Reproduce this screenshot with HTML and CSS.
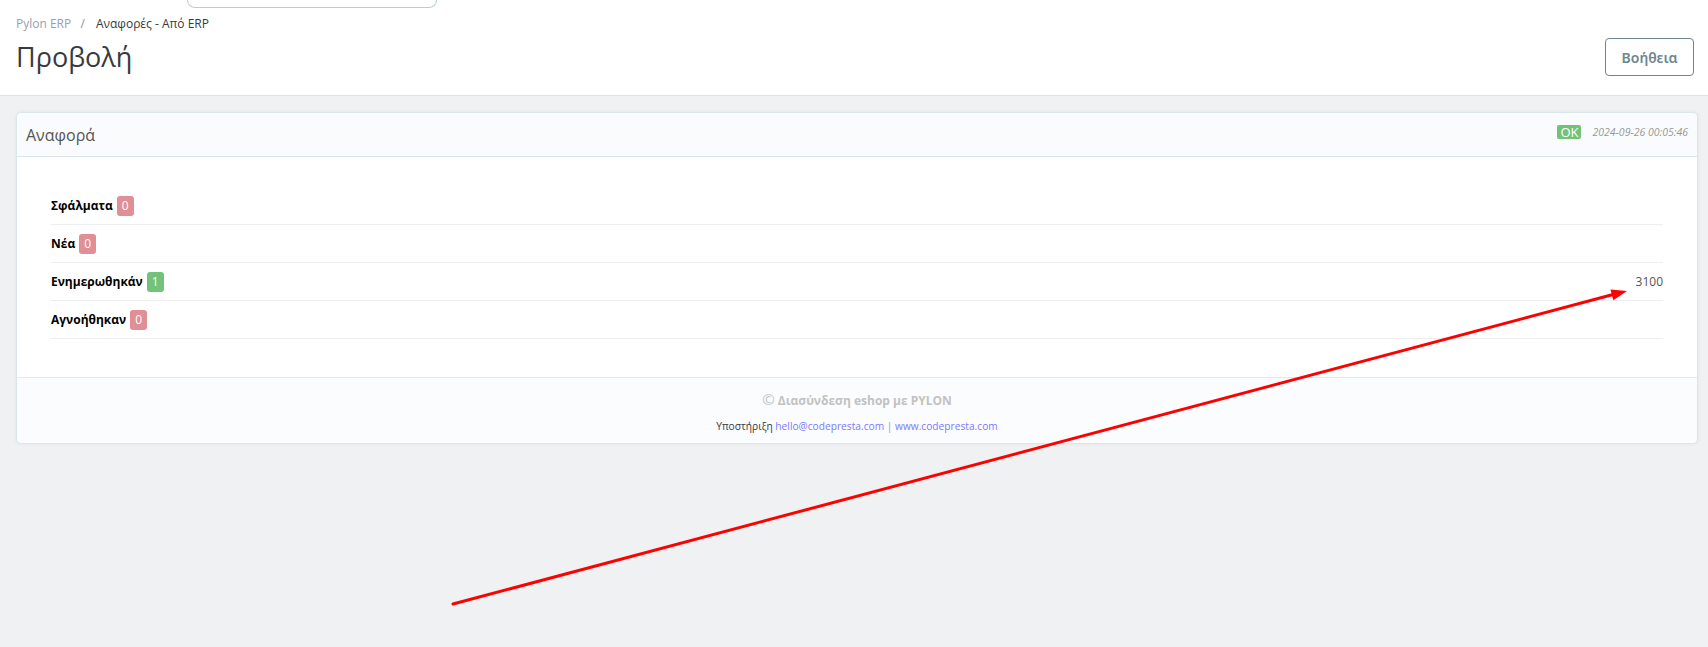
FILE: index.html
```html
<!DOCTYPE html>
<html>
<head>
    <title>Pylon ERP - Αναφορές</title>
    <link rel="stylesheet" href="styles.css">
</head>
<body>
    <div class="page-head">
        <div class="searchbox"></div>
        <div class="breadcrumb">
            <span class="crumb">Pylon ERP</span>
            <span class="sep">/</span>
            <span class="crumb-active">Αναφορές - Από ERP</span>
        </div>
        <div class="title-row">
            <h1>Προβολή</h1>
            <button class="btn-help">Βοήθεια</button>
        </div>
    </div>

    <div class="content">
        <div class="panel">
            <div class="panel-heading">
                <span class="panel-title">Αναφορά</span>
                <span class="panel-meta">
                    <span class="label-ok">OK</span>
                    <span class="date">2024-09-26 00:05:46</span>
                </span>
            </div>
            <div class="panel-body">
                <div class="row">
                    <span class="row-label">Σφάλματα <span class="badge badge-red">0</span></span>
                </div>
                <div class="row">
                    <span class="row-label">Νέα <span class="badge badge-red">0</span></span>
                </div>
                <div class="row">
                    <span class="row-label">Ενημερωθηκάν <span class="badge badge-green">1</span></span>
                    <span class="row-value">3100</span>
                </div>
                <div class="row">
                    <span class="row-label">Αγνοήθηκαν <span class="badge badge-red">0</span></span>
                </div>
            </div>
            <div class="panel-footer">
                <div class="copy"><span class="copy-mark">©</span> Διασύνδεση eshop με PYLON</div>
                <div class="support">
                    Υποστήριξη <a href="#">hello@codepresta.com</a> <span class="pipe">|</span> <a href="#">www.codepresta.com</a>
                </div>
            </div>
        </div>
    </div>

    <!-- annotation arrow drawn over the screenshot -->
    <svg class="annotation" width="1708" height="647" viewBox="0 0 1708 647">
        <line x1="453" y1="604" x2="1613" y2="294.5" stroke="#ff0000" stroke-width="3" stroke-linecap="round"/>
        <polygon points="1627,291 1613.3,300.2 1610.5,289.6" fill="#ff0000"/>
    </svg>
</body>
</html>
```

FILE: styles.css
```css
body {
    margin: 0;
    font-family: 'Open Sans', 'Noto Sans', sans-serif;
    background: #eff1f2;
    color: #363a41;
    position: relative;
    min-height: 647px;
}
.page-head {
    background: #fff;
    border-bottom: 1px solid #dde2e5;
    padding: 0 14px 19px 16px;
}
.searchbox {
    width: 248px;
    height: 7px;
    margin-left: 171px;
    border: 1px solid #bbcdd2;
    border-top: 0;
    border-radius: 0 0 16px 16px;
}
.breadcrumb {
    margin-top: 8px;
    font-size: 12px;
    line-height: 16px;
}
.crumb {
    color: #9aa0a6;
}
.sep {
    color: #8a9096;
    margin: 0 8px 0 6px;
}
.crumb-active {
    color: #363a41;
}
.title-row {
    display: flex;
    justify-content: space-between;
    align-items: center;
    margin-top: 6px;
}
h1 {
    margin: 0;
    font-size: 27px;
    font-weight: 400;
    line-height: 38px;
    color: #363a41;
}
.btn-help {
    width: 89px;
    height: 38px;
    background: #fff;
    border: 1px solid #6c868e;
    border-radius: 4px;
    color: #6c868e;
    font-family: 'Noto Sans', 'Open Sans', sans-serif;
    font-size: 14px;
    font-weight: 600;
    cursor: pointer;
}
.content {
    padding: 16px 10px 0 16px;
}
.panel {
    background: #fff;
    border: 1px solid #dbe6e9;
    border-radius: 5px;
    box-shadow: 0 0 4px rgba(0, 0, 0, 0.06);
}
.panel-heading {
    height: 43px;
    display: flex;
    justify-content: space-between;
    align-items: center;
    padding: 0 9px 0 9px;
    background: #fafbfc;
    border-bottom: 1px solid #dbe6e9;
    border-radius: 5px 5px 0 0;
}
.panel-title {
    font-size: 16px;
    color: #555;
}
.panel-meta {
    display: flex;
    align-items: center;
    gap: 11px;
    margin-top: -6px;
}
.label-ok {
    background: #72c279;
    color: #fff;
    font-size: 13px;
    line-height: 14px;
    padding: 0 3px;
    border-radius: 2px;
}
.date {
    font-size: 10.5px;
    font-style: italic;
    color: #999;
}
.panel-body {
    padding: 30px 34px 38px 34px;
}
.row {
    height: 37px;
    display: flex;
    justify-content: space-between;
    align-items: center;
    border-bottom: 1px solid #eeeeee;
}
.row-label {
    font-size: 12px;
    font-weight: 700;
    color: #000;
    display: flex;
    align-items: center;
    gap: 4px;
}
.badge {
    display: inline-block;
    min-width: 17px;
    height: 20px;
    line-height: 20px;
    text-align: center;
    border-radius: 3px;
    color: #fff;
    font-size: 12px;
    font-weight: 400;
    box-sizing: border-box;
    padding: 0 4px;
}
.badge-red {
    background: #e08f95;
}
.badge-green {
    background: #72c279;
}
.row-value {
    font-size: 12px;
    color: #555;
}
.panel-footer {
    border-top: 1px solid #e4e9eb;
    background: #fbfcfd;
    padding: 12px 0 8px;
    text-align: center;
    border-radius: 0 0 5px 5px;
}
.copy {
    font-size: 12px;
    font-weight: 700;
    line-height: 18px;
    color: #c2c2c2;
}
.copy-mark {
    font-size: 15px;
    font-weight: 400;
}
.support {
    margin-top: 7px;
    font-size: 10.2px;
    line-height: 18px;
    color: #363a41;
}
.support a {
    color: #7b79ff;
    text-decoration: none;
}
.pipe {
    color: #999;
}
.annotation {
    position: absolute;
    top: 0;
    left: 0;
    pointer-events: none;
}
```
